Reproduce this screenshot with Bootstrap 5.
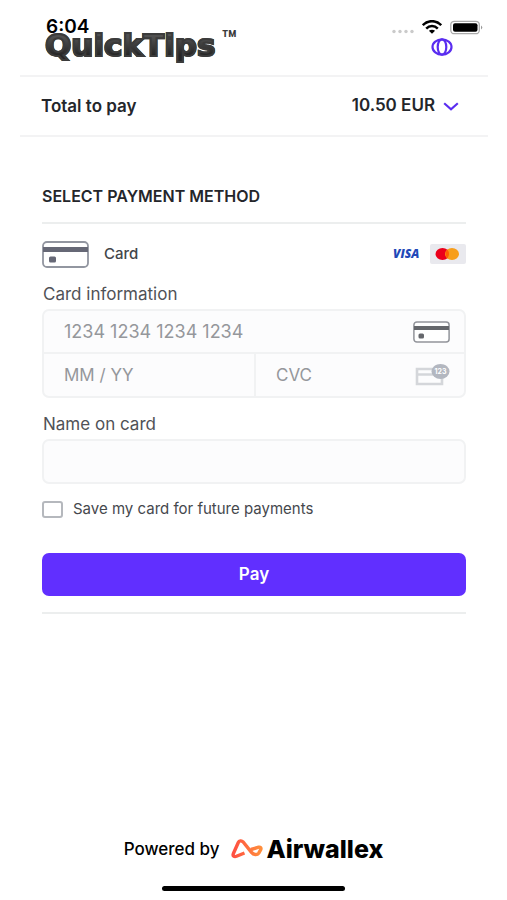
<!DOCTYPE html>
<html lang="en">
<head>
<meta charset="utf-8">
<meta name="viewport" content="width=device-width, initial-scale=1">
<title>QuickTips – Payment</title>
<link href="https://cdn.jsdelivr.net/npm/bootstrap@5.3.0/dist/css/bootstrap.min.css" rel="stylesheet">
<style>
body { font-family: Inter, "Liberation Sans", sans-serif; font-size: 17px; line-height: 20px; color: #24262b; background: #fff; }
svg { display: block; flex: none; }
.status-bar { position: absolute; top: 18px; left: 46px; right: 24px; height: 18px; color: #000; }
.clock { font-size: 19px; font-weight: 600; }
.frame { margin: 0 19px 0 20px; }
.topbar { height: 77px; padding: 25px 35px 0 25px; border-bottom: 2px solid #f3f3f4; }
.brand-name { font: 700 31px/40px "DejaVu Sans", sans-serif; color: transparent; background: linear-gradient(#505050 30%, #262626 75%); -webkit-background-clip: text; background-clip: text; -webkit-text-stroke: 2px #3b3b3b; }
.brand-tm { font: 700 24px/30px Inter, sans-serif; color: #3b3b3b; margin-left: 6px; }
.lang-btn { margin-top: 13px; }
.total { height: 60px; padding: 0 29px 0 21px; border-bottom: 2px solid #f3f3f4; }
.bold-text { font-size: 17px; font-weight: 600; }
.pay-form { margin: 0 41px 0 42px; padding-top: 49px; }
.section-title { font-size: 16px; line-height: 20px; font-weight: 600; margin: 0; padding-bottom: 16px; border-bottom: 2px solid #eceeee; }
.method { height: 60px; gap: 15px; font-size: 15px; font-weight: 500; color: #42454a; }
.field-label { display: block; font-size: 17px; line-height: 20px; color: #505257; margin: 0 0 5px 1px; }
.field-box { border: 2px solid #f1f2f3; border-radius: 7px; background: #fcfcfd; }
.field-box .form-control, .name-input { border: 0; border-radius: 0; background: transparent; font-size: 18px; line-height: 20px; padding: 10px 20px; height: 41px; min-width: 0; }
.field-box .form-control::placeholder { color: #95979b; opacity: 1; }
.split { border-top: 2px solid #f1f2f3; }
.split > div + div { border-left: 2px solid #f1f2f3; }
.split .form-control { font-size: 17px; height: 42px; }
.icon-pad { padding-right: 14px; }
.form-control.name-input { border: 2px solid #f1f2f3; border-radius: 7px; background: #fcfcfd; height: 45px; }
.save { gap: 10px; margin-top: 15px; font-size: 15px; color: #45484d; }
.save .form-check-input { width: 21px; height: 17px; margin: 0; border: 2px solid #b5b8bd; border-radius: 3px; }
.pay-btn, .pay-btn:hover { width: 100%; height: 43px; margin-top: 34px; border: 0; border-radius: 7px; background: #612fff; color: #fff; font-size: 17px; font-weight: 600; }
.end-rule { height: 2px; margin-top: 16px; background: #eceeee; }
.powered { color: #000; gap: 11px; padding-bottom: 25px; font-size: 17px; font-weight: 500; }
.wallex { color: #000; gap: 4px; font-size: 25px; line-height: 24px; font-weight: 800; }
.home-bar { width: 36%; height: 5px; border-radius: 3px; background: #000; margin: 0 auto 9px; }
</style>
<script src="https://cdn.jsdelivr.net/npm/bootstrap@5.3.0/dist/js/bootstrap.bundle.min.js" defer></script>
</head>
<body>
<div class="d-flex flex-column min-vh-100 position-relative">
  <div class="status-bar d-flex justify-content-between align-items-center">
    <span class="clock">6:04</span>
    <div class="d-flex align-items-center gap-2">
      <svg width="24" height="18" viewBox="0 0 24 18" fill="#cacaca"><circle cx="4" cy="13.500" r="1.700"/><circle cx="10" cy="13.500" r="1.700"/><circle cx="16" cy="13.500" r="1.700"/><circle cx="22" cy="13.500" r="1.700"/></svg>
      <svg width="20" height="14" viewBox="0 0 20 14" fill="none" stroke="#000" stroke-width="2.5"><path d="M.8 5.2C6-.2 14-.2 19.2 5.2M4.200 8.600c3.400-3.400 8.200-3.400 11.600 0"/><path d="M6.900 10.800c2-1.500 4.200-1.500 6.200 0L10 13.800Z" fill="#000" stroke="none"/></svg>
      <svg width="33" height="15" viewBox="0 0 33 15"><rect x=".8" y="1.300" width="28.500" height="12.400" rx="3.500" fill="none" stroke="#aaa" stroke-width="1.300"/><rect x="3" y="3.200" width="24.500" height="8.600" rx="2" fill="#000"/><path d="M31 5.500q2.500 2 0 4Z" fill="#999"/></svg>
    </div>
  </div>

  <header class="frame">
    <div class="topbar d-flex justify-content-between align-items-start">
      <div class="d-flex align-items-start"><span class="brand-name">QuickTips</span><span class="brand-tm">™</span></div>
      <button type="button" class="lang-btn btn p-0 border-0" aria-label="Language">
        <svg width="22" height="18" viewBox="0 0 22 18" fill="none" stroke="#5a2df0" stroke-width="2.200"><ellipse cx="11" cy="9" rx="9.500" ry="7.700"/><ellipse cx="11" cy="9" rx="4.300" ry="7.700"/></svg>
      </button>
    </div>
    <div class="total bold-text d-flex justify-content-between align-items-center">
      <span>Total to pay</span>
      <button type="button" class="btn p-0 border-0 d-flex align-items-center gap-2 bold-text text-reset lh-sm">10.50 EUR
        <svg width="16" height="9" viewBox="0 0 16 9" fill="none" stroke="#5a2df0" stroke-width="2.200"><path d="m1.200 1.300 6.800 6 6.800-6"/></svg>
      </button>
    </div>
  </header>

  <main>
    <form class="pay-form">
      <h1 class="section-title">SELECT PAYMENT METHOD</h1>
      <div class="method d-flex align-items-center">
        <svg width="47" height="27" viewBox="0 0 47 27"><rect x="1" y="1" width="45" height="25" rx="4" fill="#fff" stroke="#9296a0" stroke-width="1.800"/><path d="M1 6h45v5H1z" fill="#666876"/><rect x="7" y="15.500" width="7" height="6" rx="1.500" fill="#666876"/></svg>
        <span>Card</span>
        <svg class="ms-auto" width="73" height="20" viewBox="0 0 73 20" role="img" aria-label="Visa and Mastercard">
          <text x="0" y="14" font-family="Open Sans, sans-serif" font-size="12" font-weight="800" font-style="italic" fill="#2148b8">VISA</text>
          <rect x="37" width="36" height="20" rx="2" fill="#e9e9ee"/>
          <ellipse cx="49.500" cy="10" rx="7" ry="6" fill="#eb001b"/><ellipse cx="59" cy="10" rx="7" ry="6" fill="#f79e1b"/><path d="M54.300 5.600a6.600 6.600 0 0 1 0 8.800 6.600 6.600 0 0 1 0-8.800Z" fill="#ff5f00"/>
        </svg>
      </div>

      <label class="field-label" for="number">Card information</label>
      <div class="field-box">
        <div class="icon-pad d-flex align-items-center">
          <input id="number" class="form-control" type="text" placeholder="1234 1234 1234 1234">
          <svg width="37" height="22" viewBox="0 0 37 22"><rect x=".9" y=".9" width="35.200" height="20.200" rx="3" fill="#fff" stroke="#92949a" stroke-width="1.500"/><path d="M1 5h35v4H1z" fill="#65676c"/><rect x="5.500" y="12.500" width="5.500" height="5" rx="1.500" fill="#65676c"/></svg>
        </div>
        <div class="split d-flex">
          <div class="w-50"><input class="form-control" type="text" placeholder="MM / YY" aria-label="Expiry date"></div>
          <div class="w-50 icon-pad d-flex align-items-center">
            <input class="form-control" type="text" placeholder="CVC" aria-label="CVC">
            <svg width="35" height="22" viewBox="0 0 35 22"><path d="M2 5h25v15H2zM2 10.500h25" fill="none" stroke="#d4d6da" stroke-width="2.600"/><ellipse cx="25.500" cy="7.500" rx="9" ry="7.500" fill="#b3b7c0"/><text x="25.500" y="10" text-anchor="middle" font-family="Inter, sans-serif" font-size="7" font-weight="700" fill="#fff">123</text></svg>
          </div>
        </div>
      </div>

      <label class="field-label mt-3" for="holder">Name on card</label>
      <input id="holder" class="form-control name-input" type="text">

      <div class="save d-flex align-items-center">
        <input id="save" class="form-check-input" type="checkbox">
        <label for="save">Save my card for future payments</label>
      </div>
      <button type="button" class="btn pay-btn">Pay</button>
      <div class="end-rule"></div>
    </form>
  </main>

  <footer class="mt-auto">
    <div class="powered d-flex justify-content-center align-items-center">
      <span>Powered by</span>
      <div class="wallex d-flex align-items-center">
        <svg width="32" height="20" viewBox="0 0 32 20" fill="none"><defs><linearGradient id="flame" x1="0" x2="1"><stop stop-color="#ff4f42"/><stop offset="1" stop-color="#ff8e3c"/></linearGradient></defs><path d="M13.500 14 5.500 17.300c-2.300.9-4-.4-3.200-2.500L7.300 3.500c.8-1.900 3.400-2.200 4.700-.7L20.500 13.400c2 2.500 5.600 3 7.400.5l1.800-3.200c.8-1.800-.3-2.900-2-2.500L20 10.500" stroke="url(#flame)" stroke-width="3.400" stroke-linejoin="round"/></svg>
        <span>Airwallex</span>
      </div>
    </div>
    <div class="home-bar"></div>
  </footer>
</div>
</body>
</html>
